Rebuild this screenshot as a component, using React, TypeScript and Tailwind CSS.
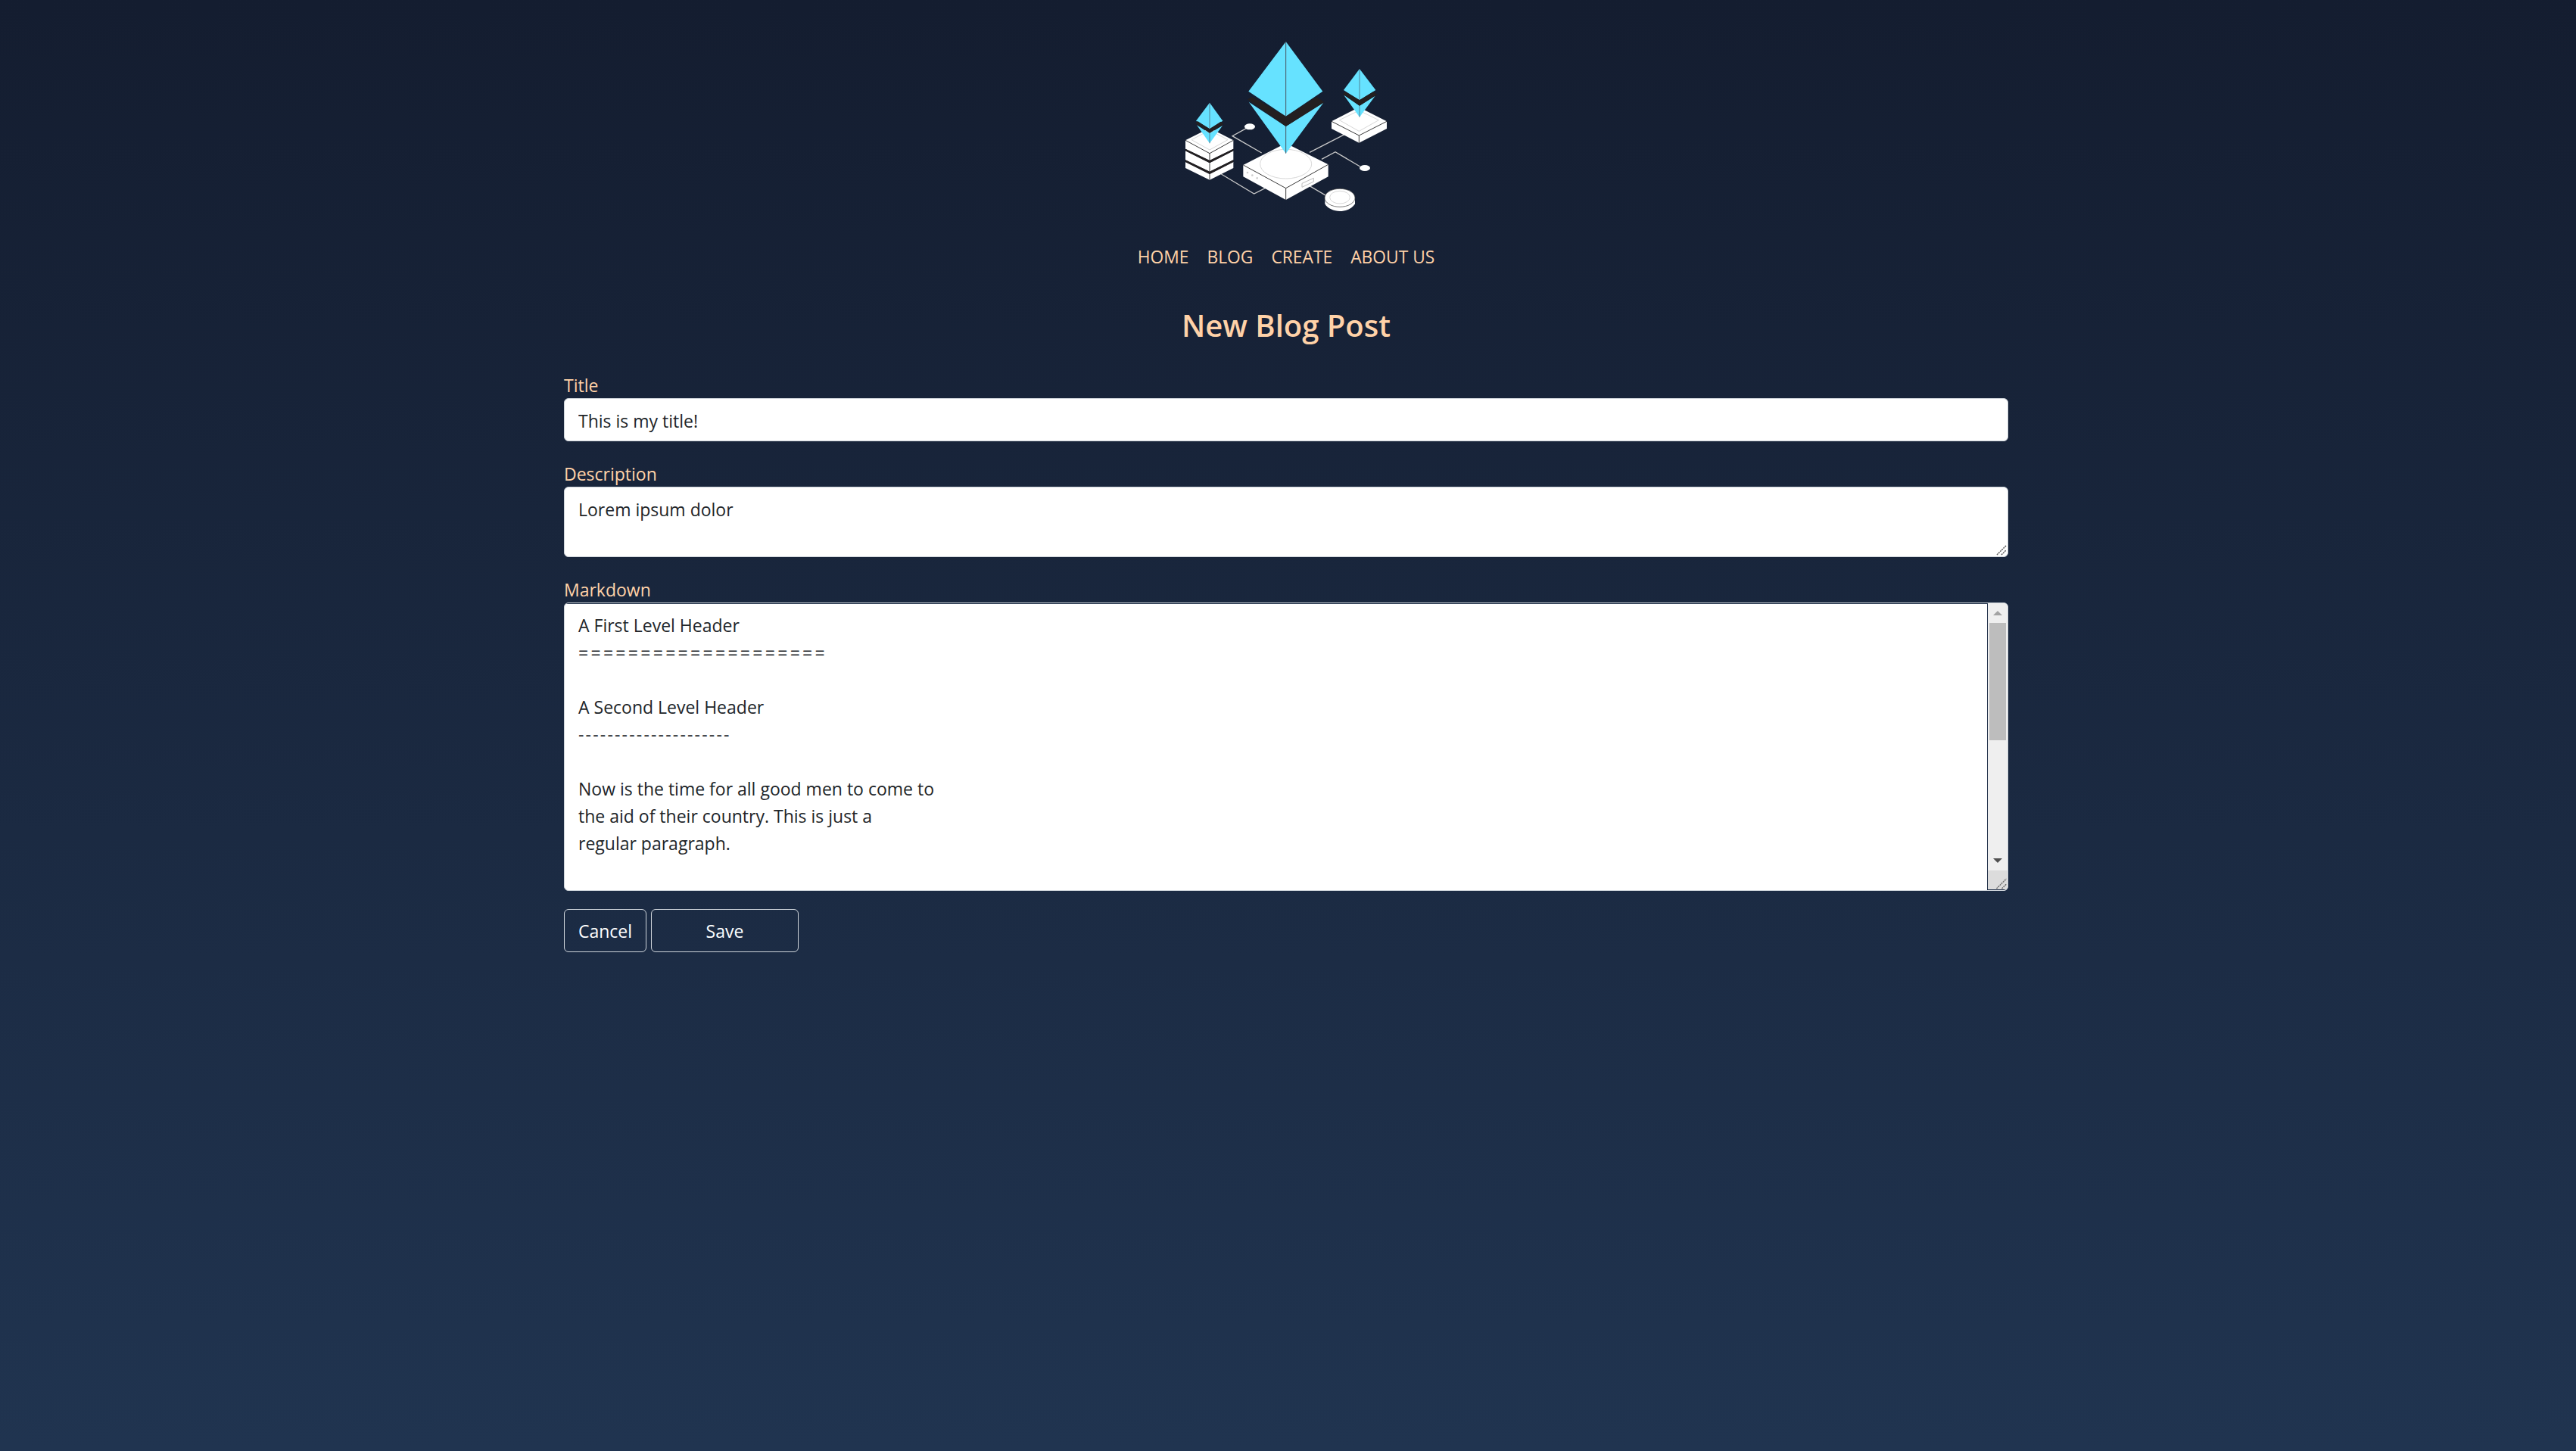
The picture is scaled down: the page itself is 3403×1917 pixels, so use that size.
const font = { fontFamily: '"Open Sans", sans-serif' };

function Logo() {
  return (
    <svg viewBox="0 0 1200 810" className="h-[270px] w-[400px]">
      {/* connector lines */}
      <g fill="none" stroke="#c9c9c9" strokeWidth="4">
        <path d="M500 516L384 449L440 418" />
        <path d="M690 514L830 442" />
        <path d="M738 541L792 512L890 570" />
        <path d="M340 600L470 678L515 655" />
        <path d="M690 647L755 685" />
      </g>
      <ellipse cx="453" cy="412" rx="21" ry="12" fill="#fff" />
      <ellipse cx="909" cy="576" rx="21" ry="12" fill="#fff" />

      {/* center box */}
      <path d="M427 564L596 478L764 562V610L596 702L427 610Z" fill="#fff" />
      <path d="M427 564L596 656L764 562M596 656V702" fill="none" stroke="#3a3a3a" strokeWidth="3" />
      <ellipse cx="596" cy="560" rx="102" ry="58" fill="#fff" stroke="#d8d8d8" strokeWidth="3" />
      <circle cx="444" cy="594" r="4" fill="#cfcfcf" />
      <circle cx="463" cy="605" r="4" fill="#cfcfcf" />
      <circle cx="482" cy="616" r="4" fill="#cfcfcf" />
      <path d="M660 637L706 616V630L660 652Z" fill="#fff" stroke="#bdbdbd" strokeWidth="3" />

      {/* coin */}
      <path d="M751 695V718C760 736 786 747 810 747C836 747 860 736 870 718V695Z" fill="#fff" />
      <ellipse cx="810" cy="694" rx="60" ry="36" fill="#fff" stroke="#3a3a3a" strokeWidth="2" />
      <ellipse cx="810" cy="692" rx="40" ry="25" fill="#fff" stroke="#d8d8d8" strokeWidth="3" />

      {/* right box */}
      <path d="M777 391L886 335L996 391V420L886 476L777 420Z" fill="#fff" />
      <path d="M777 391L886 447L996 391M886 447V476" fill="none" stroke="#3a3a3a" strokeWidth="3" />
      <path d="M808 386L886 348L964 386L886 430Z" fill="#fff" stroke="#d8d8d8" strokeWidth="3" />

      {/* left stack */}
      <path d="M198 552L294 600L388 552V576L294 623L198 576Z" fill="#fff" />
      <path d="M198 508L294 556L388 508V544L294 590L198 544Z" fill="#fff" />
      <path d="M198 466L294 418L388 466V500L294 546L198 500Z" fill="#fff" />
      <path d="M198 500L294 546L388 500L388 508L294 556L198 508Z" fill="#231f20" />
      <path d="M198 544L294 590L388 544V552L294 600L198 552Z" fill="#231f20" />
      <path d="M198 466L294 518L388 466M294 518V546M294 556V590M294 600V623" fill="none" stroke="#3a3a3a" strokeWidth="3" />
      <path d="M222 464L294 426L366 464L294 504Z" fill="#fff" stroke="#d8d8d8" strokeWidth="3" />

      {/* large diamond */}
      <path d="M596 75L742 272L596 371L448 272Z" fill="#66e2ff" />
      <path d="M449 314L596 411L745 317L596 518Z" fill="#66e2ff" />
      <path d="M444 304L462 293L596 371L718 293L748 315L596 411Z" fill="#231f20" />
      <path d="M596 75V371M596 411V518" stroke="#4a5560" strokeWidth="3" />

      {/* right diamond */}
      <path d="M888 183L952 267L888 307L825 267Z" fill="#66e2ff" />
      <path d="M826 287L888 329L950 290L888 374Z" fill="#66e2ff" />
      <path d="M822 282L832 274L888 307L942 274L958 284L888 329Z" fill="#231f20" />
      <path d="M888 183V307M888 329V374" stroke="#4a5560" strokeWidth="2" />

      {/* left diamond */}
      <path d="M294 317L346 389L294 421L240 389Z" fill="#66e2ff" />
      <path d="M243 406L294 438L345 408L294 478Z" fill="#66e2ff" />
      <path d="M238 399L246 390L294 421L338 392L350 401L294 438Z" fill="#231f20" />
      <path d="M294 317V421M294 438V478" stroke="#4a5560" strokeWidth="2" />
    </svg>
  );
}

function NavLink({ children }: { children: string }) {
  return <a className="text-[22.8px] leading-[36px] text-[#ffd2a8]">{children}</a>;
}

function Label({ children }: { children: string }) {
  return <label className="block h-[35px] text-[23px] leading-[36px] text-[#ffd2a8]">{children}</label>;
}

function ResizeGrip() {
  return (
    <svg viewBox="0 0 16 16" className="absolute right-0 bottom-0 h-[16px] w-[16px]">
      <path d="M1 13L13 1M7 13L13 7" stroke="#5a5a5a" strokeWidth="1.5" strokeDasharray="2 1" />
    </svg>
  );
}

function Scrollbar() {
  return (
    <div className="flex w-[27px] shrink-0 flex-col border-l border-[#1c2b44] bg-[#efefef]">
      <div className="flex h-[26px] shrink-0 items-center justify-center">
        <div className="h-0 w-0 border-x-[6px] border-b-[6px] border-x-transparent border-b-[#a3a3a3]" />
      </div>
      <div className="mx-[2px] h-[155px] shrink-0 bg-[#bdbdbd]" />
      <div className="flex-1" />
      <div className="flex h-[26px] shrink-0 items-center justify-center">
        <div className="h-0 w-0 border-x-[6px] border-t-[6px] border-x-transparent border-t-[#505050]" />
      </div>
      <div className="relative h-[26px] shrink-0 border-b border-[#1c2b44] bg-[#dcdcdc]">
        <svg viewBox="0 0 25 25" className="absolute inset-0 h-full w-full">
          <path d="M11 24L24 11M18 24L24 18" stroke="#6b6b6b" strokeWidth="1.5" strokeDasharray="2 1" />
        </svg>
      </div>
    </div>
  );
}

export default function App() {
  return (
    <div
      style={font}
      className="flex min-h-[1917px] flex-col items-center bg-gradient-to-b from-[#141d30] to-[#203450] pr-[5px]"
    >
      <div className="ml-[2px] pt-[30px]">
        <Logo />
      </div>
      <nav className="mt-[22px] flex gap-[24px]">
        <NavLink>HOME</NavLink>
        <NavLink>BLOG</NavLink>
        <NavLink>CREATE</NavLink>
        <NavLink>ABOUT US</NavLink>
      </nav>
      <h1 className="mt-[47px] text-[40px] leading-[50px] font-semibold text-[#ffd2a8]">New Blog Post</h1>
      <form className="mt-[36px] w-[1908px]">
        <Label>Title</Label>
        <input
          defaultValue="This is my title!"
          className="block h-[57px] w-full rounded-[6px] border border-[#ced4da] bg-white px-[18px] pt-[2px] text-[23px] text-[#212529]"
        />
        <div className="mt-[25px]">
          <Label>Description</Label>
          <div className="relative">
            <textarea
              defaultValue="Lorem ipsum dolor"
              className="block h-[93px] w-full resize-none rounded-[6px] border border-[#ced4da] bg-white px-[18px] py-[11px] text-[23px] leading-[36px] text-[#212529]"
            />
            <ResizeGrip />
          </div>
        </div>
        <div className="mt-[25px]">
          <Label>Markdown</Label>
          <div className="flex h-[381px] overflow-hidden rounded-[6px] border border-[#ced4da] bg-white">
            <div className="flex-1 border-t border-[#1c2b44] px-[18px] py-[10px] text-[23px] leading-[36px] text-[#212529]">
              <div>A First Level Header</div>
              <div className="tracking-[3.3px]">====================</div>
              <div className="h-[36px]" />
              <div>A Second Level Header</div>
              <div className="tracking-[2.2px]">---------------------</div>
              <div className="h-[36px]" />
              <div>Now is the time for all good men to come to</div>
              <div>the aid of their country. This is just a</div>
              <div>regular paragraph.</div>
            </div>
            <Scrollbar />
          </div>
        </div>
        <div className="mt-[24px] flex gap-[6px]">
          <button type="button" className="h-[57px] w-[109px] rounded-[6px] border border-[#ced4da] pt-[2px] text-[23px] text-white">
            Cancel
          </button>
          <button type="button" className="h-[57px] w-[195px] rounded-[6px] border border-[#ced4da] pt-[2px] text-[23px] text-white">
            Save
          </button>
        </div>
      </form>
    </div>
  );
}
